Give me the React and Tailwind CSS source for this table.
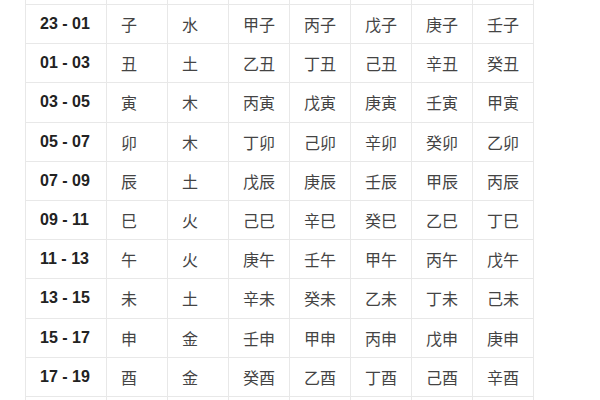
const rows = [
  ['23 - 01', '子', '水', '甲子', '丙子', '戊子', '庚子', '壬子'],
  ['01 - 03', '丑', '土', '乙丑', '丁丑', '己丑', '辛丑', '癸丑'],
  ['03 - 05', '寅', '木', '丙寅', '戊寅', '庚寅', '壬寅', '甲寅'],
  ['05 - 07', '卯', '木', '丁卯', '己卯', '辛卯', '癸卯', '乙卯'],
  ['07 - 09', '辰', '土', '戊辰', '庚辰', '壬辰', '甲辰', '丙辰'],
  ['09 - 11', '巳', '火', '己巳', '辛巳', '癸巳', '乙巳', '丁巳'],
  ['11 - 13', '午', '火', '庚午', '壬午', '甲午', '丙午', '戊午'],
  ['13 - 15', '未', '土', '辛未', '癸未', '乙未', '丁未', '己未'],
  ['15 - 17', '申', '金', '壬申', '甲申', '丙申', '戊申', '庚申'],
  ['17 - 19', '酉', '金', '癸酉', '乙酉', '丁酉', '己酉', '辛酉'],
];

const blank = Array.from({ length: 8 });

export default function App() {
  return (
    <div className="w-[600px] h-[400px] overflow-hidden bg-white pl-[25px]">
      <div className="grid w-fit grid-cols-[80px_repeat(7,60px)] grid-rows-[4px_repeat(10,38.2px)_6px] gap-px bg-[#e8e8e8] px-px">
        {blank.map((_, i) => (
          <div key={'t' + i} className="bg-white" />
        ))}
        {rows.map((row) =>
          row.map((cell, j) => (
            <div
              key={row[0] + j}
              className={
                j === 0
                  ? "flex items-center bg-white pl-[14px] text-[16px] font-bold text-[#222] font-['Liberation_Sans',Arial,sans-serif]"
                  : "flex items-center bg-white pl-[14px] text-[16px] text-[#444] font-['Noto_Sans_CJK_SC','Noto_Sans',sans-serif]"
              }
            >
              {cell}
            </div>
          ))
        )}
        {blank.map((_, i) => (
          <div key={'b' + i} className="bg-white" />
        ))}
      </div>
    </div>
  );
}
